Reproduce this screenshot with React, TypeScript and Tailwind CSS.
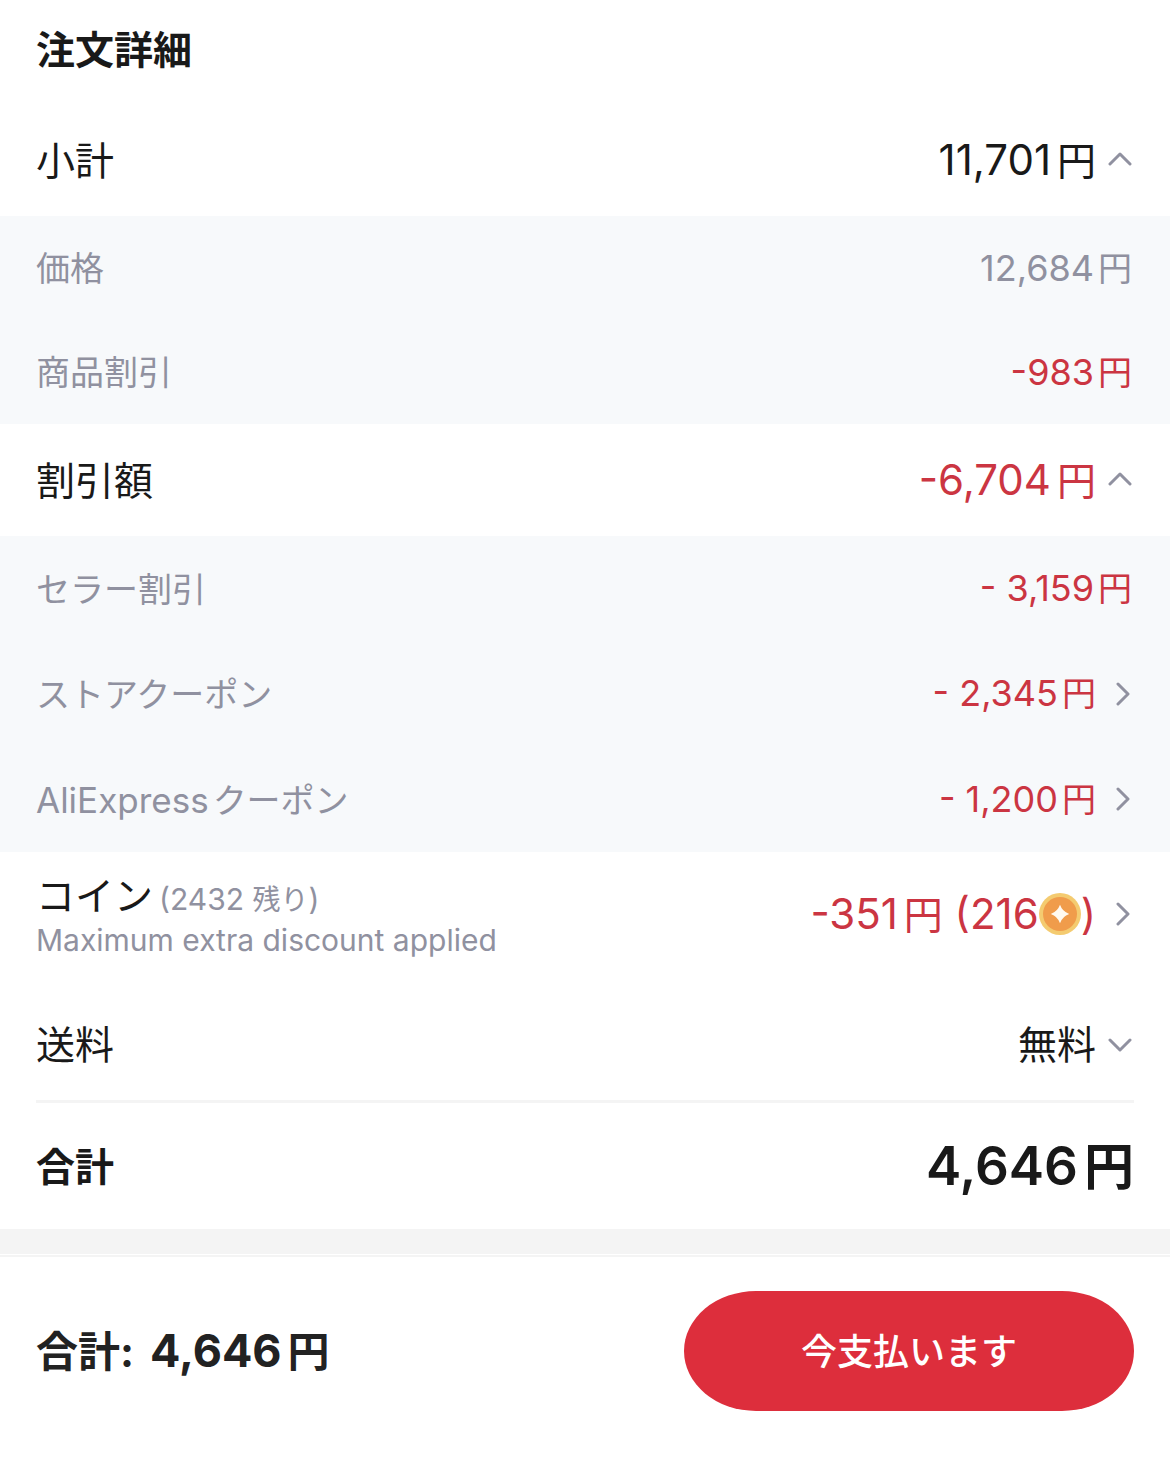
import { useState, type ReactNode } from "react";

type IconProps = { className?: string };

function ChevronUp({ className = "" }: IconProps) {
  return (
    <svg viewBox="0 0 24 14" className={`mr-0.5 h-[14px] w-[24px] shrink-0 ${className}`} aria-hidden="true">
      <path d="M2 12 L12 2 L22 12" fill="none" stroke="currentColor" strokeWidth="3" strokeLinecap="round" strokeLinejoin="round" />
    </svg>
  );
}

function ChevronRight() {
  return (
    <svg viewBox="0 0 14 24" className="mr-1 h-[24px] w-[14px] shrink-0 text-[#9091a0]" aria-hidden="true">
      <path d="M2 2 L12 12 L2 22" fill="none" stroke="currentColor" strokeWidth="3" strokeLinecap="round" strokeLinejoin="round" />
    </svg>
  );
}

function Coin() {
  return (
    <svg viewBox="0 0 42 42" className="size-[42px] shrink-0" aria-hidden="true">
      <circle cx="21" cy="21" r="21" fill="#f4cb70" />
      <circle cx="21" cy="21" r="17" fill="#f09c4b" />
      <path d="M21 11.8 Q23.4 18.6 30.2 21 Q23.4 23.4 21 30.2 Q18.6 23.4 11.8 21 Q18.6 18.6 21 11.8 Z" fill="#fffaf0" />
    </svg>
  );
}

function Yen({ value, yenClass }: { value: string; yenClass: string }) {
  return (
    <span className="whitespace-nowrap">
      {value}
      <span className={yenClass}>円</span>
    </span>
  );
}

function ToggleRow({
  label,
  open,
  onToggle,
  children,
}: {
  label: string;
  open: boolean;
  onToggle: () => void;
  children: ReactNode;
}) {
  return (
    <button
      type="button"
      aria-expanded={open}
      onClick={onToggle}
      className="flex h-28 w-full items-center justify-between px-9 text-left"
    >
      <span className="pt-0.5 text-[39px] leading-12">{label}</span>
      <span className="flex items-center gap-3 text-[42px] leading-12">
        {children}
        <ChevronUp className={open ? "mb-0.5 text-[#9091a0]" : "mt-0.5 rotate-180 text-[#9091a0]"} />
      </span>
    </button>
  );
}

function SubRow({
  label,
  value,
  red,
  link,
}: {
  label: ReactNode;
  value: string;
  red?: boolean;
  link?: boolean;
}) {
  const amount = (
    <span className={red ? "text-[36px] text-[#cb3542]" : "text-[36px] text-[#9091a0]"}>
      <Yen value={value} yenClass="mr-0.5 ml-1 text-[34px]" />
    </span>
  );

  return (
    <div className="flex flex-1 items-center justify-between px-9 leading-12">
      <span className="pt-0.5 text-[34px] text-[#9091a0]">{label}</span>
      {link ? (
        <button type="button" className="flex items-center gap-[18px]">
          {amount}
          <ChevronRight />
        </button>
      ) : (
        amount
      )}
    </div>
  );
}

export default function App() {
  const [showSubtotal, setShowSubtotal] = useState(true);
  const [showDiscount, setShowDiscount] = useState(true);
  const [showShipping, setShowShipping] = useState(false);

  return (
    <main lang="ja" className="min-h-screen bg-white font-['Inter','Noto_Sans_CJK_JP',sans-serif] text-[#191919]">
      <h1 className="flex h-[104px] items-center px-9 pb-1 text-[39px] font-bold leading-12">注文詳細</h1>

      <ToggleRow label="小計" open={showSubtotal} onToggle={() => setShowSubtotal(!showSubtotal)}>
        <Yen value="11,701" yenClass="ml-1.5 text-[39px]" />
      </ToggleRow>
      {showSubtotal && (
        <div className="flex h-[208px] flex-col bg-[#f7f9fb]">
          <SubRow label="価格" value="12,684" />
          <SubRow label="商品割引" value="-983" red />
        </div>
      )}

      <ToggleRow label="割引額" open={showDiscount} onToggle={() => setShowDiscount(!showDiscount)}>
        <span className="text-[#cb3542]">
          <Yen value="-6,704" yenClass="ml-1.5 text-[39px]" />
        </span>
      </ToggleRow>
      {showDiscount && (
        <div className="flex h-[316px] flex-col bg-[#f7f9fb]">
          <SubRow label="セラー割引" value="- 3,159" red />
          <SubRow label="ストアクーポン" value="- 2,345" red link />
          <SubRow
            label={
              <>
                <span className="mr-1 text-[35px]">AliExpress</span>クーポン
              </>
            }
            value="- 1,200"
            red
            link
          />
        </div>
      )}

      <button type="button" className="flex h-[136px] w-full items-center justify-between px-9 pb-3 text-left">
        <span className="flex flex-col pt-2">
          <span className="text-[39px] leading-10">
            コイン
            <span className="ml-1.5 text-[30px] text-[#9091a0]">
              (2432 <span className="text-[28px]">残り</span>)
            </span>
          </span>
          <span className="text-[30px] leading-10 text-[#9091a0]">Maximum extra discount applied</span>
        </span>
        <span className="flex items-center gap-5 text-[42px] leading-12 text-[#cb3542]">
          <span className="flex items-center whitespace-pre">
            <Yen value="-351" yenClass="ml-1.5 text-[39px]" /> (216
            <Coin />)
          </span>
          <ChevronRight />
        </span>
      </button>

      <ToggleRow label="送料" open={showShipping} onToggle={() => setShowShipping(!showShipping)}>
        <span className="pt-0.5 text-[39px]">無料</span>
      </ToggleRow>

      <div className="mx-9 flex h-[129px] items-center justify-between border-t-3 border-[#f4f4f4]">
        <span className="pt-0.5 text-[39px] font-bold">合計</span>
        <span className="pt-0.5 text-[53px] font-semibold">
          <Yen value="4,646" yenClass="ml-1.5 text-[50px]" />
        </span>
      </div>

      <div className="h-[25px] bg-[#f4f4f4]" />

      <footer className="mt-px flex items-center justify-between border-t-2 border-[#f4f4f4] px-9 pt-[34px] pb-[53px]">
        <span className="flex items-baseline gap-4 text-[45px] font-bold text-[#222222]">
          <span className="text-[42px]">合計:</span>
          <Yen value="4,646" yenClass="ml-1.5 text-[42px]" />
        </span>
        <button
          type="button"
          className="h-[120px] w-[450px] rounded-[72px/60px] bg-[#dd2e3c] pt-0.5 text-[36px] font-medium text-white"
        >
          今支払います
        </button>
      </footer>
    </main>
  );
}
